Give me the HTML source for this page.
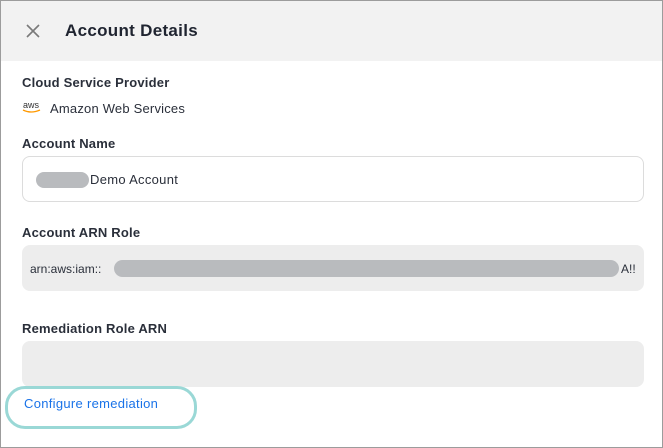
<!DOCTYPE html>
<html><head><style>
body{margin:0;width:663px;height:448px;overflow:hidden;font-family:"Liberation Sans",sans-serif;background:#fff;position:relative}
.frame{position:absolute;left:0;top:0;width:661px;height:446px;border:1px solid #9c9c9c}
.hdr{position:absolute;left:1px;top:1px;width:661px;height:60px;background:#f2f2f2}
.t{position:absolute;font-weight:bold;color:#1f2430}
.lbl{position:absolute;left:22px;font-size:13px;font-weight:bold;color:#2a2f3a;letter-spacing:0.2px}
.box{position:absolute;left:22px;width:622px;height:46px;border-radius:8px;box-sizing:border-box}
.blur{position:absolute;background:#b9bbbe;border-radius:10px}
</style></head><body>
<div class="hdr"></div>
<svg style="position:absolute;left:26px;top:24px" width="14" height="14"><path d="M1 1L13 13M13 1L1 13" stroke="#7a7a7a" stroke-width="1.6"/></svg>
<div class="t" style="left:65px;top:21px;font-size:17px;letter-spacing:0.3px">Account Details</div>
<div class="lbl" style="top:75px">Cloud Service Provider</div>
<div style="position:absolute;left:23px;top:101px;font-size:9px;color:#333;line-height:9px">aws</div>
<svg style="position:absolute;left:22px;top:109px" width="20" height="6"><path d="M1 1Q9 5 18 1" stroke="#f90" stroke-width="1.3" fill="none"/></svg>
<div style="position:absolute;left:50px;top:101px;font-size:13px;color:#2a2f3a;letter-spacing:0.2px">Amazon Web Services</div>
<div class="lbl" style="top:136px">Account Name</div>
<div class="box" style="top:156px;border:1px solid #dcdcdc;background:#fff"></div>
<div class="blur" style="left:36px;top:172px;width:53px;height:16px"></div>
<div style="position:absolute;left:90px;top:172px;font-size:13px;color:#2a2f3a;letter-spacing:0.3px">Demo Account</div>
<div class="lbl" style="top:225px">Account ARN Role</div>
<div class="box" style="top:245px;background:#ededed"></div>
<div style="position:absolute;left:30px;top:262px;font-size:12px;color:#2a2f3a">arn:aws:iam::</div>
<div class="blur" style="left:114px;top:260px;width:505px;height:17px"></div>
<div style="position:absolute;left:621px;top:262px;font-size:12px;color:#2a2f3a">A!!</div>
<div class="lbl" style="top:321px">Remediation Role ARN</div>
<div class="box" style="top:341px;background:#ededed"></div>
<div style="position:absolute;left:5px;top:386px;width:186px;height:37px;border:3px solid #9ad8d6;border-radius:20px"></div>
<div style="position:absolute;left:24px;top:396px;font-size:13px;color:#1a73e8;letter-spacing:0.3px">Configure remediation</div>
<div class="frame"></div>
</body></html>
